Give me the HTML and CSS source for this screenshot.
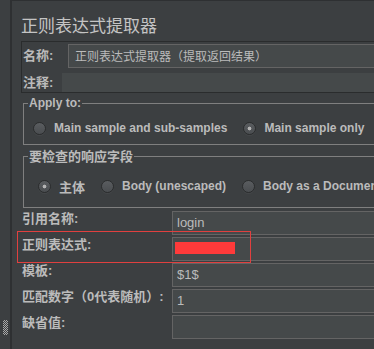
FILE: index.html
```html
<!DOCTYPE html>
<html>
  <head>
    <meta name="viewport" content="width=device-width, initial-scale=1">
    <link rel="stylesheet" href="styles.css">
  </head>

  <body>
    <div class="app">
      <div class="gutter"><div class="grip"></div></div>

      <div class="panel">
        <h1 class="title">正则表达式提取器</h1>

        <div class="namebox">
          <div class="row row-name">
            <span class="label">名称:</span>
            <div class="field">正则表达式提取器（提取返回结果）</div>
          </div>
          <div class="row row-comment">
            <span class="label">注释:</span>
            <div class="field field-flat"></div>
          </div>
        </div>

        <fieldset class="group group-apply">
          <legend>Apply to:</legend>
          <div class="options">
            <label class="option"><input type="radio" name="scope" class="radio"> Main sample and sub-samples</label>
            <label class="option"><input type="radio" name="scope" class="radio" checked> Main sample only</label>
          </div>
        </fieldset>

        <fieldset class="group group-field">
          <legend class="legend-cn">要检查的响应字段</legend>
          <div class="options">
            <label class="option option-cn"><input type="radio" name="body" class="radio" checked> 主体</label>
            <label class="option"><input type="radio" name="body" class="radio"> Body (unescaped)</label>
            <label class="option"><input type="radio" name="body" class="radio"> Body as a Document</label>
          </div>
        </fieldset>

        <div class="form">
          <span class="label">引用名称:</span>
          <div class="field">login</div>

          <span class="label">正则表达式:</span>
          <div class="field field-redacted"><span class="redact"></span></div>

          <span class="label">模板:</span>
          <div class="field">$1$</div>

          <span class="label">匹配数字（0代表随机）:</span>
          <div class="field">1</div>

          <span class="label">缺省值:</span>
          <div class="field"></div>

          <!-- annotation box around the regex row -->
          <div class="highlight"></div>
        </div>
      </div>
    </div>
  </body>
</html>
```

FILE: styles.css
```css
/* Page */
body {
margin: 0;
width: 374px;
height: 349px;
overflow: hidden;
background: #3c3f41;
color: #bbbbbb;
font-family: "Liberation Sans", "Noto Sans CJK SC", sans-serif;
}

.app {
display: flex;
height: 349px;
}

/* Left strip with the split grip */
.gutter {
width: 10px;
flex: none;
display: flex;
flex-direction: column;
justify-content: flex-end;
padding-bottom: 14px;
box-sizing: border-box;
}

.grip {
width: 5px;
height: 15px;
margin-left: 3px;
background: repeating-conic-gradient(#a9a9a9 0 25%, transparent 0 50%) 0 0 / 2px 2px;
}

.panel {
flex: none;
width: 430px;
border-left: 2px solid #2e3032;
border-top: 1px solid #2e3032;
padding: 12px 0 0 9px;
}

.title {
margin: 0;
font-family: "Noto Sans CJK SC", sans-serif;
font-weight: normal;
font-size: 17px;
line-height: 24px;
color: #c4c4c4;
}

.label {
font-family: "Liberation Sans", "Noto Sans CJK SC", sans-serif;
font-weight: bold;
font-size: 13px;
line-height: 16px;
white-space: nowrap;
}

.field {
box-sizing: border-box;
height: 24px;
background: #45494a;
border: 1px solid #646464;
padding-left: 4px;
font-size: 13px;
line-height: 22px;
color: #bbbbbb;
}

/* Name / comment box */
.namebox {
margin-top: 4px;
border: 1px solid #2a2c2d;
padding: 2px 0 0 1px;
}

.row {
display: flex;
align-items: center;
}

.row-name .label {
width: 45px;
}

.row-name .field {
flex: 1;
padding-left: 6px;
font-family: "Noto Sans CJK SC", sans-serif;
font-size: 12px;
}

.row-comment {
margin-top: 5px;
}

.row-comment .label {
width: 39px;
}

.field-flat {
flex: 1;
height: 19px;
border: none;
}

/* Titled groups */
.group {
margin: 3px 0 0 2px;
border: 1px solid #7f7f7f;
padding: 0 0 6px 4px;
min-width: 0;
}

.group legend {
padding: 0 1px;
font-weight: bold;
font-size: 12px;
line-height: 14px;
}

.group .legend-cn {
font-family: "Noto Sans CJK SC", sans-serif;
font-size: 13px;
}

.options {
display: flex;
align-items: center;
height: 20px;
}

.group-apply .options {
padding: 8px 0 0 5px;
}

.group-field {
margin-top: 4px;
padding-bottom: 11px;
}

.group-field .options {
padding: 13px 0 0 10px;
}

.option {
display: flex;
align-items: center;
gap: 8px;
font-weight: bold;
font-size: 12px;
white-space: nowrap;
}

.option + .option {
margin-left: 16px;
}

.option-cn {
font-family: "Noto Sans CJK SC", sans-serif;
font-size: 13px;
}

.radio {
-webkit-appearance: none;
appearance: none;
width: 13px;
height: 13px;
margin: 0;
border-radius: 50%;
border: 1px solid #2b2d2e;
background: linear-gradient(#5a5d60, #4a4d50);
box-shadow: 0 1px 0 #45484a;
box-sizing: border-box;
}

.radio:checked {
background: radial-gradient(circle, #b4b4b4 0 1.6px, transparent 2.2px), linear-gradient(#5a5d60, #4a4d50);
}

/* Extractor settings */
.form {
position: relative;
margin: 3px 0 0 1px;
display: grid;
grid-template-columns: 150px 1fr;
grid-auto-rows: 24px;
row-gap: 2px;
}

.form .label {
align-self: start;
}

.field-redacted {
padding-left: 2px;
}

.redact {
display: block;
width: 60px;
height: 12px;
margin-top: 4px;
background: #ff3a3a;
}

.highlight {
position: absolute;
left: -5px;
top: 20px;
width: 234px;
height: 32px;
box-sizing: border-box;
border: 1px solid #e0403f;
}
```
